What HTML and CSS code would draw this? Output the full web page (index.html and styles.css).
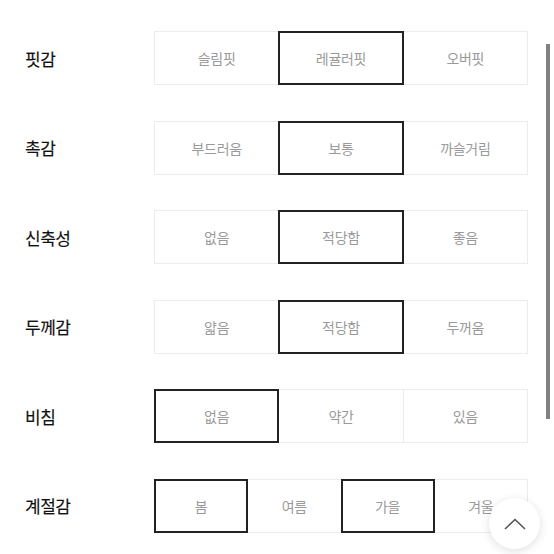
FILE: index.html
```html
<!DOCTYPE html>
<html lang="ko">
<head>
<meta charset="utf-8">
<link rel="stylesheet" href="styles.css">
</head>
<body>
<div class="page">
  <div class="row">
    <div class="label">핏감</div>
    <div class="opts">
      <div class="opt">슬림핏</div>
      <div class="opt sel">레귤러핏</div>
      <div class="opt">오버핏</div>
    </div>
  </div>
  <div class="row">
    <div class="label">촉감</div>
    <div class="opts">
      <div class="opt">부드러움</div>
      <div class="opt sel">보통</div>
      <div class="opt">까슬거림</div>
    </div>
  </div>
  <div class="row">
    <div class="label">신축성</div>
    <div class="opts">
      <div class="opt">없음</div>
      <div class="opt sel">적당함</div>
      <div class="opt">좋음</div>
    </div>
  </div>
  <div class="row">
    <div class="label">두께감</div>
    <div class="opts">
      <div class="opt">얇음</div>
      <div class="opt sel">적당함</div>
      <div class="opt">두꺼움</div>
    </div>
  </div>
  <div class="row">
    <div class="label">비침</div>
    <div class="opts">
      <div class="opt sel">없음</div>
      <div class="opt">약간</div>
      <div class="opt">있음</div>
    </div>
  </div>
  <div class="row">
    <div class="label">계절감</div>
    <div class="opts">
      <div class="opt sel">봄</div>
      <div class="opt">여름</div>
      <div class="opt sel">가을</div>
      <div class="opt">겨울</div>
    </div>
  </div>
</div>
<div class="scrollbar"></div>
<button class="top-btn" aria-label="맨 위로">
  <svg width="22" height="12" viewBox="0 0 22 12"><path d="M1 11 L11 1.5 L21 11" fill="none" stroke="#555" stroke-width="1.6"/></svg>
</button>
</body>
</html>
```
FILE: styles.css
```css
html, body {
  margin: 0;
  padding: 0;
  background: #fff;
  overflow: hidden;
}
body {
  font-family: "Noto Sans CJK KR", "Noto Sans", sans-serif;
  width: 554px;
  height: 554px;
  position: relative;
}
.page {
  padding: 31px 26px 0 25px;
  display: flex;
  flex-direction: column;
  gap: 35.6px;
}
.row {
  display: flex;
  align-items: center;
  height: 54px;
}
.label {
  width: 129px;
  font-size: 17px;
  font-weight: 400;
  -webkit-text-stroke: 0.15px #111;
  color: #111;
  letter-spacing: -0.5px;
}
.opts {
  flex: 1;
  display: grid;
  grid-auto-flow: column;
  grid-auto-columns: 1fr;
  height: 54px;
  border-left: 1px solid #ececec;
}
.opt {
  box-sizing: border-box;
  border: 1px solid #ececec;
  border-left: none;
  display: flex;
  align-items: center;
  justify-content: center;
  font-size: 14px;
  color: #9a9a9a;
  letter-spacing: -0.3px;
  position: relative;
}
.opt.sel {
  border: 2px solid #222;
  margin-left: -1px;
  z-index: 1;
}
.scrollbar {
  position: absolute;
  left: 546px;
  top: 44px;
  width: 4px;
  height: 375px;
  background: #808080;
}
.top-btn {
  position: absolute;
  left: 489px;
  top: 498px;
  width: 51px;
  height: 51px;
  border-radius: 50%;
  border: none;
  background: #fff;
  box-shadow: 0 2px 10px rgba(0,0,0,0.13);
  display: flex;
  align-items: center;
  justify-content: center;
  padding: 0;
  z-index: 5;
}
```
